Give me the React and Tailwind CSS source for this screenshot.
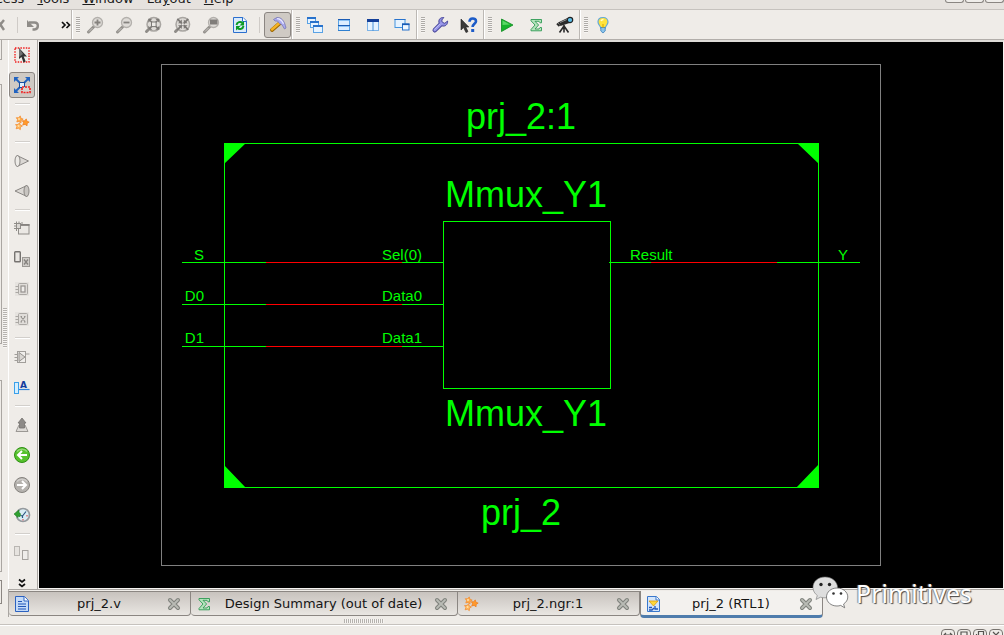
import React from "react";

const Svg = ({ children, size = 18, ...rest }) => (
  <svg width={size} height={size} viewBox={`0 0 ${size} ${size}`} fill="none" aria-hidden="true" className="block shrink-0" {...rest}>
    {children}
  </svg>
);

/* ---------- top toolbar icons (18 x 18) ---------- */

const Lens = ({ children }) => (
  <Svg>
    <path d="M7.500 11 L2.500 16" stroke="#95928e" strokeWidth="3" strokeLinecap="round" />
    <path d="M6.500 12 L3 15.500" stroke="#c9c6c2" strokeWidth="1" />
    <circle cx="11.500" cy="6.500" r="5" fill="#dedbd7" stroke="#b3b0ac" strokeWidth="1.300" />
    {children}
  </Svg>
);
const ZoomIn = () => <Lens><path d="M8.500 6.500h6M11.500 3.500v6" stroke="#85827e" strokeWidth="1.800" /></Lens>;
const ZoomOut = () => <Lens><path d="M8.500 6.500h6" stroke="#85827e" strokeWidth="1.800" /></Lens>;
const ZoomBox = () => <Lens><path d="M8 3.500h7.500v5H8z" fill="#807d7a" /></Lens>;
const BigLens = ({ children }) => (
  <Svg>
    <path d="M4.500 13.500 L2.500 15.500" stroke="#8f8c88" strokeWidth="3" strokeLinecap="round" />
    <circle cx="9.800" cy="8.300" r="6.800" fill="#dedbd7" stroke="#a9a6a2" strokeWidth="1.500" />
    {children}
  </Svg>
);
const ZoomFull = () => (
  <BigLens>
    <path d="M6 4.500 L13.600 12.100M13.600 4.500 L6 12.100" stroke="#7b7875" strokeWidth="1.500" />
    <path d="M4.300 2.800h4L4.300 6.800zM15.300 2.800h-4l4 4zM15.300 13.800v-4l-4 4zM4.300 13.800v-4l4 4z" fill="#7b7875" />
    <rect x="7.500" y="6" width="4.600" height="4.600" fill="#eceae6" stroke="#7b7875" />
  </BigLens>
);
const ZoomFit = () => (
  <BigLens>
    <path d="M4.300 2.800 L15.300 13.800M15.300 2.800 L4.300 13.800" stroke="#7b7875" strokeWidth="1.700" />
    <path d="M8.800 7.300V3.500L5 7.300zM10.800 7.300V3.500L14.600 7.300zM10.800 9.300v3.800L14.600 9.300zM8.800 9.300v3.800L5 9.300z" fill="#7b7875" />
    <rect x="8.800" y="7.300" width="2" height="2" fill="#eceae6" />
  </BigLens>
);
const Refresh = () => (
  <Svg>
    <path d="M2.500 1.500h9.500l3.500 3.500v11.500h-13z" fill="#d9eafb" stroke="#2b6fce" />
    <path d="M11.500 1.500v4h4" fill="#fff" stroke="#2b6fce" />
    <path d="M5.500 9c.5-3 4-4 6-2" stroke="#0b9b23" strokeWidth="1.900" />
    <path d="M13 5v4.500H8.500z" fill="#0b9b23" />
    <path d="M12.500 10c-.5 3-4 4-6 2" stroke="#0b9b23" strokeWidth="1.900" />
    <path d="M5 14.500V10h4.500z" fill="#0b9b23" />
  </Svg>
);
const Hammer = () => (
  <Svg>
    <path d="M10.500 7.500 L3 14" stroke="#9c6700" strokeWidth="3.800" strokeLinecap="round" />
    <path d="M10.500 7 L3 13.500" stroke="#f5b324" strokeWidth="2.400" strokeLinecap="round" />
    <path d="M4.500 3.500 L8 1.500 C12 1 15.500 4.500 17 12 L15.500 13 L13 8.800 L10.500 7.500 L8.500 5 L6 5z" fill="#aaaaf0" stroke="#7777b4" strokeWidth=".8" />
    <path d="M8 2.700c3 0 5 2 6.500 5" stroke="#e8e8ff" strokeWidth="1.300" />
  </Svg>
);
const Win = ({ x, y, w, h }) => (
  <g>
    <rect x={x + 0.5} y={y + 0.5} width={w - 1} height={h - 1} fill="#e6f3ff" stroke="#5aa2e4" />
    <rect x={x} y={y} width={w} height="2" fill="#2872cc" />
  </g>
);
const Cascade = () => <Svg><Win x={1} y={1} w={9} h={7} /><Win x={4} y={5} w={9} h={7} /><Win x={7} y={9} w={10} h={8} /></Svg>;
const SplitH = () => (
  <Svg>
    <rect x="3.500" y="3.500" width="11" height="11" fill="#dceeff" stroke="#5aa2e4" />
    <path d="M3 3.500h12M3 9.500h12" stroke="#1b5cb4" />
    <path d="M4 4.500h10M4 10.500h10" stroke="#8cc2f2" />
    <path d="M3 14.500h12" stroke="#2f80d0" />
  </Svg>
);
const SplitV = () => (
  <Svg>
    <rect x="3.500" y="3.500" width="11" height="11" fill="#e6f3ff" stroke="#7db4e8" />
    <path d="M3 3h12v3H3z" fill="#143f98" />
    <path d="M9 6v9" stroke="#4a92d8" />
  </Svg>
);
const Float = () => (
  <Svg>
    <rect x="2" y="3.500" width="10" height="8" fill="#e6f3ff" stroke="#4594de" />
    <path d="M1.500 3.500h11" stroke="#2872cc" />
    <rect x="9.500" y="8" width="6.500" height="6" fill="#f0f8ff" stroke="#2872cc" />
    <path d="M9 8.300h7.500" stroke="#1b5cb4" strokeWidth="1.600" />
  </Svg>
);
const Wrench = () => (
  <Svg>
    <path d="M3.800 14.200 L10 8" stroke="#4c4a9c" strokeWidth="4.600" strokeLinecap="round" />
    <path d="M12.800 1.500 C9 1.200 7 4 8.200 7.200 L10.800 9.800 C14.200 11 17 8.400 16.600 5 L13.800 7.300 L11.200 6.300 L10.800 4z" fill="#8f8ee0" stroke="#4c4a9c" />
    <path d="M3.800 14 L10.500 7.500" stroke="#9a99ea" strokeWidth="2.700" strokeLinecap="round" />
    <path d="M3.500 13.500 L9 8" stroke="#c8c8fa" strokeWidth=".8" />
  </Svg>
);
const WhatsThis = () => (
  <Svg>
    <path d="M1 3v11l2.600-2.400 2.400 5 2-1-2.200-4.600h3z" fill="#3a3a3a" stroke="#222" strokeWidth=".6" />
    <path d="M9.500 5.800C9.500 1.500 16 1.500 16 5.200c0 2.500-3.400 2.800-3.400 5.800" stroke="#1d5cc8" strokeWidth="2.600" />
    <path d="M11.200 13h3v3h-3z" fill="#1d5cc8" />
  </Svg>
);
const Run = () => (
  <Svg>
    <path d="M3.500 3 L15 9 L3.500 15.500z" fill="#16b32c" stroke="#0c8a1e" strokeWidth=".8" />
    <path d="M4.500 4.500 L12 8.500 L4.500 9z" fill="#5ad866" />
  </Svg>
);
const Sigma = () => (
  <Svg>
    <path d="M4 3.500h10.500v3.300h-1.500L12 5.300H8l3.600 3.700L8 13h4l1-1.500h1.500v3.300H4v-1.300L8 9 4 4.800z" fill="#b4e4bc" stroke="#2f9a54" strokeWidth=".9" />
  </Svg>
);
const Telescope = () => (
  <Svg>
    <path d="M2 6.500 L12.500 1.500 L15 6.500 L4.500 10z" fill="#2b2b2b" />
    <path d="M4 6.500 L12 3" stroke="#8b8b8b" />
    <path d="M1 7.500 L3.500 10" stroke="#2b2b2b" strokeWidth="2" />
    <circle cx="14" cy="4" r="2.700" fill="#5cc0ea" stroke="#222" strokeWidth="1.200" />
    <path d="M8 9v4M8 10 L3.500 16.500M8 10 L12.500 16.500M8 11v5.500" stroke="#2b2b2b" strokeWidth="1.600" />
  </Svg>
);
const Bulb = () => (
  <Svg>
    <path d="M9 1.500c-3.200 0-5 2-5 4.600 0 2.500 2.400 3.800 2.800 6h4.400c.4-2.200 2.800-3.500 2.800-6 0-2.600-1.800-4.600-5-4.600z" fill="#ffe33d" stroke="#62a8d8" strokeWidth="1.200" />
    <path d="M7 5c.6-1.200 1.500-1.500 2.500-1.500" stroke="#fffbd0" strokeWidth="1.600" />
    <path d="M6.800 11.500h4.400v3.500L9 17l-2.200-2z" fill="#8cc4ea" stroke="#3d83bd" strokeWidth=".8" />
    <path d="M9 8v4" stroke="#d6a300" />
  </Svg>
);
const Undo = () => (
  <Svg>
    <path d="M5 6.500h5.500c4.500 0 4.500 6.500 0 7H8.500" stroke="#8f8c88" strokeWidth="2.400" />
    <path d="M3 4v7h7z" fill="#8f8c88" />
  </Svg>
);

/* ---------- side toolbar icons ---------- */

const Pointer = () => (
  <Svg>
    <rect x="2" y="2" width="14" height="14" stroke="#f02020" strokeWidth="1.400" strokeDasharray="1.500 1.200" />
    <path d="M6 2v11l2.500-2 2 5.500 2.200-1-2-5H14z" fill="#333" />
    <path d="M6 2v9l4-3z" fill="#707070" />
  </Svg>
);
const PushPop = () => (
  <Svg>
    <path d="M3 3 L15 15M15 3 L3 15" stroke="#2163c0" strokeWidth="1.800" />
    <path d="M1 1h5L1 6zM17 1h-5l5 5zM1 17v-5l5 5z" fill="#2163c0" />
    <rect x="6.500" y="6.500" width="5" height="5" fill="#dceeff" stroke="#1a4e9e" />
    <rect x="9" y="11" width="8" height="5.500" fill="#d8d3ce" stroke="#f02020" strokeWidth="1.600" strokeDasharray="2 1" />
  </Svg>
);
const starPath = (cx, cy, r) => {
  const points = [];
  for (let i = 0; i < 10; i++) {
    const radius = i % 2 ? r * 0.52 : r;
    const angle = (Math.PI / 5) * i - Math.PI / 2 + 0.2;
    points.push(`${(cx + radius * Math.cos(angle)).toFixed(2)},${(cy + radius * Math.sin(angle)).toFixed(2)}`);
  }
  return points.join(" ");
};
const Stars = () => (
  <Svg>
    <polygon points={starPath(6.5, 5.5, 3.7)} fill="#ffab48" stroke="#f28a2c" strokeWidth=".7" />
    <polygon points={starPath(12.5, 8.5, 3.7)} fill="#ff9a2c" stroke="#ee7a18" strokeWidth=".7" />
    <polygon points={starPath(5.8, 12.3, 3.7)} fill="#ffb860" stroke="#f28a2c" strokeWidth=".7" />
    <circle cx="6" cy="5" r="1" fill="#ffe0a8" /><circle cx="5.500" cy="12" r="1" fill="#ffe0a8" />
  </Svg>
);
const ConeRight = () => (
  <Svg><path d="M4 3.500 L15.500 9 L4 14.500z" fill="#dbd8d4" stroke="#8a8784" /><ellipse cx="4.500" cy="9" rx="2.500" ry="5.500" fill="#eceae6" stroke="#8a8784" /></Svg>
);
const ConeLeft = () => (
  <Svg><path d="M14 3.500 L2 9 L14 14.500z" fill="#dbd8d4" stroke="#8a8784" /><ellipse cx="13.500" cy="9" rx="2.500" ry="5.500" fill="#c8c5c1" stroke="#8a8784" /></Svg>
);
const AddBlock = () => (
  <Svg>
    <rect x="5.500" y="4.500" width="10.500" height="9.500" fill="#ebe8e4" stroke="#8f8c88" />
    <path d="M5 5h11.500" stroke="#85827e" strokeWidth="1.800" />
    <rect x="3.500" y="3.500" width="4" height="5" fill="#dad7d3" stroke="#8f8c88" />
    <path d="M1 3.500h2M1 6h2M1 8.500h2M3.500 1.500v2M6 1.500v2M8 3h2M3.500 9v2" stroke="#8f8c88" />
  </Svg>
);
const BlockX = () => (
  <Svg>
    <rect x="1.700" y="1.700" width="5.600" height="10" rx=".8" fill="#e9e6e2" stroke="#767370" strokeWidth="1.400" />
    <rect x="9.500" y="7.500" width="7" height="9" fill="#cfccc8" stroke="#9b9894" />
    <path d="M11 9.500 L15 14.500M15 9.500 L11 14.500" stroke="#85827e" strokeWidth="1.300" />
  </Svg>
);
const ChipBase = ({ children }) => (
  <Svg>
    <rect x="2" y="2" width="14" height="14" fill="#e6e3df" />
    <rect x="5.500" y="3.500" width="9" height="11" rx="1" fill="#e0ddd9" stroke="#aba8a4" />
    <path d="M2.500 6.500h3M2.500 9.500h3M2.500 12.500h3" stroke="#aba8a4" />
    {children}
  </Svg>
);
const ChipO = () => <ChipBase><rect x="8" y="6" width="4" height="6" fill="#efedea" stroke="#95928e" strokeWidth="1.200" /></ChipBase>;
const ChipX = () => <ChipBase><path d="M8 7 L12 11.500M12 7 L8 11.500M7.500 6.500h1.500M11 6.500h1.500M7.500 12h1.500M11 12h1.500" stroke="#95928e" strokeWidth="1.100" /></ChipBase>;
const Gate = () => (
  <Svg>
    <rect x="4.500" y="3.500" width="8" height="11" fill="#f0eeeb" stroke="#a19e9a" />
    <path d="M6 4.500 L12 9 L6 13.500z" fill="#d8d5d1" stroke="#95928e" />
    <path d="M1.500 6.500h3M1.500 9.500h3M1.500 12.500h3M13 6h3.500" stroke="#a19e9a" />
  </Svg>
);
const PinName = () => (
  <Svg>
    <rect x="1.500" y="4.500" width="4" height="11" fill="#d4efff" stroke="#3aa0ea" />
    <path d="M6 11.500h10.500" stroke="#2f80d8" strokeWidth="1.200" />
    <text x="7" y="10" fontFamily="DejaVu Sans, sans-serif" fontWeight="700" fontSize="9" fill="#143c9e">A</text>
  </Svg>
);
const UpArrow = () => (
  <Svg>
    <path d="M6 9 L3 15.500h12L12 9" fill="#dedbd7" stroke="#9b9894" />
    <path d="M9 2 L13 7h-1.500v5h-5V7H5z" fill="#8d8a87" stroke="#75726f" strokeWidth=".8" />
  </Svg>
);
const RoundArrow = ({ fill, edge, back }) => (
  <Svg>
    <circle cx="9" cy="9" r="7.500" fill={fill} stroke={edge} />
    <path d="M4 5.500C6 2.500 12 2.500 14 5.500" stroke="#fff" strokeOpacity=".35" strokeWidth="1.500" />
    {back
      ? <path d="M14 9H6M9 5 L5 9 L9 13" stroke="#fff" strokeWidth="2" />
      : <path d="M4 9h8M9 5 L13 9 L9 13" stroke="#fff" strokeWidth="2" />}
  </Svg>
);
const History = () => (
  <Svg>
    <circle cx="10" cy="9" r="6.500" fill="#d9edf4" stroke="#959a9e" strokeWidth="1.700" />
    <path d="M9.500 10 L13 5.500M7.500 9.500 L9.500 10V12" stroke="#2b5680" strokeWidth="1.200" />
    <path d="M14 9v1.500M10 13v1.500" stroke="#e05252" strokeWidth="1.200" />
    <path d="M1 8 L6 4v2.500c2 .5 2 3 .5 4.500 0-1-.5-1-1-1L5 11.500z" fill="#30a030" stroke="#1f7c24" strokeWidth=".6" />
  </Svg>
);
const TwoBlocks = () => (
  <Svg>
    <rect x="1.500" y="2.500" width="5" height="9" fill="#e6e3df" stroke="#b9b6b2" />
    <rect x="9.500" y="6.500" width="5.500" height="9" fill="#efedea" stroke="#a5a29e" />
  </Svg>
);

/* ---------- tab icons ---------- */

const PageIcon = () => (
  <Svg>
    <path d="M2.500 1.500h9l4 4v11h-13z" fill="#c3daf8" stroke="#2c62c0" />
    <path d="M11 1.500v4.500h4.500" fill="#fff" stroke="#2c62c0" />
    <path d="M5 6.500h4M5 9h8M5 11.500h8M5 14h8" stroke="#2055b8" strokeWidth="1.200" />
  </Svg>
);
const RtlIcon = () => (
  <Svg>
    <path d="M2.500 1.500h9l3 3v12h-12z" fill="#d4e6fb" stroke="#3a78cc" />
    <path d="M11 1.500v3.500h3.500" fill="#fff" stroke="#3a78cc" />
    <path d="M4 6h9L8.500 11z" fill="#ffd83a" stroke="#d99a10" strokeWidth=".8" />
    <path d="M4 12.500h3M10 11v3h3M4 15h3l2-2" stroke="#2055b8" strokeWidth="1.300" />
  </Svg>
);
const CloseIcon = () => (
  <Svg size={14}>
    <path d="M3 3 L11 11M11 3 L3 11" stroke="#7f827c" strokeWidth="4" strokeLinecap="round" />
    <path d="M3 3 L11 11M11 3 L3 11" stroke="#b9bbb5" strokeWidth="1.800" strokeLinecap="round" />
  </Svg>
);

/* ---------- toolbar parts ---------- */

const Tool = ({ label, icon: Icon }) => (
  <button type="button" aria-label={label} className="flex h-7 w-[29px] items-center justify-center"><Icon /></button>
);
const Handle = () => (
  <span className="ml-[3px] h-4 w-1 bg-[repeating-linear-gradient(to_bottom,#aeaba7_0px,#aeaba7_1px,#f7f5f3_1px,#f7f5f3_2px)]" />
);
const Group = ({ children, last }) => (
  <div className={last ? "flex flex-1 items-center border-l border-white" : "flex items-center border-r border-l border-r-[#bcb8b4] border-l-white"}>
    <Handle />
    {children}
  </div>
);

const menus = ["Process", "Tools", "Window", "Layout", "Help"];

const MenuBar = () => (
  <nav className="flex h-[9px] items-end justify-between overflow-hidden bg-[#e6e2de]">
    <div className="-ml-[26px] flex gap-[11px]">
      {menus.map((name) => {
        const at = name === "Layout" ? 2 : 0;
        return (
          <button key={name} type="button" className="flex h-5 items-center px-px text-[13px] leading-5 whitespace-pre text-[#1c1c1c]">
            <span>{name.slice(0, at)}<span className="underline underline-offset-1">{name[at]}</span>{name.slice(at + 1)}</span>
          </button>
        );
      })}
    </div>
    <div className="flex gap-px self-start">
      {["Minimize", "Restore", "Close"].map((label) => (
        <button key={label} type="button" aria-label={label} className="h-[3px] w-[19px] rounded-b-sm border border-t-0 border-[#8a8682] bg-[#efedea]" />
      ))}
    </div>
  </nav>
);

const TopBar = () => (
  <div className="flex h-[31px] border-t border-b border-t-[#c6c2be] border-b-[#b2aeaa] bg-[#efece8]">
    <div className="flex w-[72px] items-center border-r border-[#bcb8b4]">
      <button type="button" aria-label="Delete" className="flex w-[17px]">
        <svg width="8" height="12" viewBox="0 0 8 12" aria-hidden="true"><path d="M-4 -1 L4 11M4 1 L-4 11" stroke="#8f8c88" strokeWidth="2.400" /></svg>
      </button>
      <span className="h-4 w-px bg-[#cfcbc7]" />
      <Tool label="Undo" icon={Undo} />
      <button type="button" aria-label="More tools" className="ml-3.5 flex">
        <svg width="10" height="8" viewBox="0 0 10 8" fill="none" aria-hidden="true"><path d="M1 1 L4 4 L1 7M5.500 1 L8.500 4 L5.500 7" stroke="#111" strokeWidth="1.700" /></svg>
      </button>
    </div>
    <Group>
      <Tool label="Zoom in" icon={ZoomIn} />
      <Tool label="Zoom out" icon={ZoomOut} />
      <Tool label="Full view" icon={ZoomFull} />
      <Tool label="Fit selection" icon={ZoomFit} />
      <Tool label="Zoom to box" icon={ZoomBox} />
      <Tool label="Refresh" icon={Refresh} />
      <span className="mr-1 ml-[5px] h-4 w-px bg-[#cfcbc7]" />
      <button type="button" aria-label="Toolbox" aria-pressed="true" className="flex h-[26px] w-[27px] items-center justify-center rounded-[3px] border border-[#8b8682] bg-[#cfcac4]"><Hammer /></button>
    </Group>
    <Group>
      <Tool label="Cascade" icon={Cascade} />
      <Tool label="Tile horizontally" icon={SplitH} />
      <Tool label="Tile vertically" icon={SplitV} />
      <Tool label="Float window" icon={Float} />
    </Group>
    <Group>
      <Tool label="Settings" icon={Wrench} />
      <Tool label="What is this" icon={WhatsThis} />
    </Group>
    <Group>
      <Tool label="Run" icon={Run} />
      <Tool label="Summary" icon={Sigma} />
      <Tool label="Find" icon={Telescope} />
    </Group>
    <Group last>
      <Tool label="Tips" icon={Bulb} />
    </Group>
  </div>
);

const Back = () => <RoundArrow fill="#56c22c" edge="#2f8f14" back />;
const Forward = () => <RoundArrow fill="#b5b2ae" edge="#85827e" />;

const sideGroups = [
  [["Select", Pointer], ["Push into", PushPop, true]],
  [["New schematic", Stars]],
  [["Drivers", ConeRight], ["Loads", ConeLeft]],
  [["Add block", AddBlock], ["Remove block", BlockX], ["Show pins", ChipO], ["Hide pins", ChipX]],
  [["Expand gate", Gate], ["Pin names", PinName]],
  [["Up", UpArrow], ["Back", Back], ["Forward", Forward], ["History", History]],
  [["Compare", TwoBlocks]],
];

const SideBar = () => (
  <div className="flex w-[29px] shrink-0 flex-col items-center border-l border-white pr-0.5">
    {sideGroups.map((items, i) => (
      <React.Fragment key={i}>
        {i > 0 && <span className="my-[3px] h-0.5 w-[15px] shrink-0 border-t border-b border-t-[#d2cfcb] border-b-white" />}
        {items.map(([label, Icon, pressed]) => (
          <button
            key={label}
            type="button"
            aria-label={label}
            className={pressed
              ? "my-0.5 flex h-[26px] w-[26px] shrink-0 items-center justify-center rounded-[3px] border border-[#8b8682] bg-[#cfcac4]"
              : "flex h-[30px] w-[26px] shrink-0 items-center justify-center"}
          >
            <Icon />
          </button>
        ))}
      </React.Fragment>
    ))}
    <button type="button" aria-label="More tools" className="flex h-5 shrink-0 items-end">
      <svg width="8" height="10" viewBox="0 0 8 10" fill="none" aria-hidden="true"><path d="M1 1.500 L4 4 L7 1.500M1 6 L4 8.500 L7 6" stroke="#111" strokeWidth="1.700" /></svg>
    </button>
  </div>
);

/* ---------- schematic ---------- */

const big = { fontSize: 36, textAnchor: "middle" };
const inputs = [
  { y: 262, base: 260, port: "S", pin: "Sel(0)" },
  { y: 304, base: 301, port: "D0", pin: "Data0" },
  { y: 346, base: 343, port: "D1", pin: "Data1" },
];

const Schematic = () => (
  <svg viewBox="39 42 964 546" className="block h-full w-full" fontFamily="Liberation Sans, Arial, sans-serif" role="img" aria-label="prj_2 schematic">
    <g fill="none" shapeRendering="crispEdges">
      <rect x="161.500" y="64.500" width="719" height="501" stroke="#808080" />
      <rect x="224.500" y="143.500" width="594" height="344" stroke="#00ff00" />
      <rect x="443.500" y="221.500" width="167" height="167" stroke="#00ff00" />
      {inputs.map(({ y }) => (
        <g key={y}>
          <path d={`M182 ${y + 0.5}H266M402 ${y + 0.5}H443`} stroke="#00ff00" />
          <path d={`M266 ${y + 0.5}H402`} stroke="#ff0000" />
        </g>
      ))}
      <path d="M609 262.500H651M777 262.500H860" stroke="#00ff00" />
      <path d="M651 262.500H777" stroke="#ff0000" />
    </g>
    <path d="M224 143h22L224 164zM819 143h-22L819 164zM224 488h22L224 465zM819 488h-23L819 464z" fill="#00ff00" />
    <g fill="#00ff00" fontSize="15">
      <text x="521" y="129" {...big}>prj_2:1</text>
      <text x="526" y="207" {...big}>Mmux_Y1</text>
      <text x="526" y="426" {...big}>Mmux_Y1</text>
      <text x="521" y="525" {...big}>prj_2</text>
      {inputs.map(({ base, port, pin }) => (
        <g key={port} textAnchor="end">
          <text x="204" y={base}>{port}</text>
          <text x="422" y={base}>{pin}</text>
        </g>
      ))}
      <text x="630" y="260">Result</text>
      <text x="838" y="260">Y</text>
    </g>
  </svg>
);

/* ---------- tabs ---------- */

const Tab = ({ title, icon, width, active }) => (
  <div
    className={`${width} flex items-center pr-[5px] pl-1 ${active
      ? "h-[27px] rounded-b-sm border-r border-b-[3px] border-l border-r-[#8b8682] border-b-[#4f7cac] border-l-[#8b8682] bg-[#f3f1ee] pt-0.5"
      : "h-[25px] rounded-b-sm border border-l-0 border-[#8b8682] bg-linear-to-b from-[#c8c3be] to-[#e9e6e2]"}`}
  >
    <button type="button" role="tab" aria-selected={!!active} className="flex h-full min-w-0 flex-1 items-center">
      {icon}
      <span className="flex-1 text-center text-[13px] leading-4 whitespace-nowrap text-[#141414]">{title}</span>
    </button>
    <button type="button" aria-label={`Close ${title}`} className="mr-1 flex"><CloseIcon /></button>
  </div>
);

const WindowButton = ({ label, d }) => (
  <button type="button" aria-label={label} className="flex h-3 w-3.5 items-center justify-center rounded border border-[#77736f]">
    <svg width="10" height="10" viewBox="0 0 10 10" fill="none" aria-hidden="true"><path d={d} stroke="#55524f" strokeWidth="1.200" /></svg>
  </button>
);

const Watermark = () => (
  <div className="absolute right-8 bottom-[25px] flex items-center gap-[7px]">
    <svg width="37" height="34" viewBox="0 0 37 34" aria-hidden="true">
      <path d="M13 1C6 1 1 5.500 1 11.500c0 3.300 1.600 6 4.300 8L4 23.500l4.500-2.300c1.500.5 3 .6 4.500.6 7 0 12.500-4.500 12.500-10.300S20 1 13 1z" fill="#dedede" stroke="#777" strokeWidth=".6" />
      <circle cx="9" cy="8.500" r="1.700" fill="#222" /><circle cx="17.500" cy="8.500" r="1.700" fill="#222" />
      <path d="M25 12c-6 0-10.500 4-10.500 9S19 30 25 30c1.300 0 2.600-.2 3.700-.6l4 2.400-1.100-3.800c2.500-1.600 4.200-4.100 4.200-7C35.800 16 31 12 25 12z" fill="#fff" stroke="#666" strokeWidth=".8" />
      <circle cx="21.500" cy="17.500" r="1.300" fill="#333" /><circle cx="29" cy="17.500" r="1.300" fill="#333" />
    </svg>
    <span className="font-['Noto_Sans',sans-serif] text-[25px] leading-8 text-white [text-shadow:1px_1px_1px_#444,-1px_0_1px_#888]">Primitives</span>
  </div>
);

export default function App() {
  return (
    <div className="relative flex h-screen flex-col overflow-hidden bg-[#efece8] font-['DejaVu_Sans',sans-serif]">
      <MenuBar />
      <TopBar />
      <main className="flex min-h-0 flex-1">
        <div className="flex w-2 shrink-0 flex-col">
          <div className="h-5 w-0.5 border-r border-b border-[#aaa6a2]" />
          <div className="mt-6 h-[260px] w-0.5 border-t border-r border-b border-[#aaa6a2]" />
          <div className="-mt-9 ml-[3px] h-10 w-1 shrink-0 bg-[repeating-linear-gradient(to_bottom,#b5b2ae_0px,#b5b2ae_1px,#f7f5f3_1px,#f7f5f3_2px)]" />
          <div className="mt-8 w-0.5 flex-1 border-t border-r border-b border-[#aaa6a2]" />
          <div className="mt-2 h-6 w-0.5 border-t border-r border-b border-[#8b8682]" />
          <div className="h-5 shrink-0" />
        </div>
        <div className="flex min-w-0 flex-1 flex-col">
          <div className="flex min-h-0 flex-1">
            <SideBar />
            <div className="min-w-0 flex-1 border-l border-[#aaa6a2]">
              <div className="h-full border border-t-2 border-[#f6f4f2] border-t-[#dedbd7] bg-black"><Schematic /></div>
            </div>
          </div>
          <div role="tablist" className="flex h-7 items-start border-t border-l border-[#aaa6a2] pt-px">
            <Tab title="prj_2.v" icon={<PageIcon />} width="w-[182px]" />
            <Tab title="Design Summary (out of date)" icon={<Sigma />} width="w-[267px]" />
            <Tab title="prj_2.ngr:1" icon={<Stars />} width="w-[182px]" />
            <Tab title="prj_2 (RTL1)" icon={<RtlIcon />} width="w-[183px]" active />
          </div>
          <div className="flex h-[7px] items-center pl-[336px]">
            <span className="h-1 w-10 bg-[repeating-linear-gradient(to_right,#b5b2ae_0px,#b5b2ae_1px,#f7f5f3_1px,#f7f5f3_2px)]" />
          </div>
        </div>
      </main>
      <footer className="h-[11px] overflow-hidden border-t border-[#c6c2be] shadow-[inset_0_1px_0_#fff]">
        <div className="flex justify-end gap-0.5 pt-1 pr-px">
          <WindowButton label="Expand panel" d="M1 5h8M3 3 L1 5 L3 7M7 3 L9 5 L7 7" />
          <WindowButton label="Maximize panel" d="M2 2h6v6H2z" />
          <WindowButton label="Float panel" d="M3.500 1.500h5v5h-5zM1.500 4v4.500H6" />
          <WindowButton label="Close panel" d="M2 2 L8 8M8 2 L2 8" />
        </div>
      </footer>
      <Watermark />
    </div>
  );
}
